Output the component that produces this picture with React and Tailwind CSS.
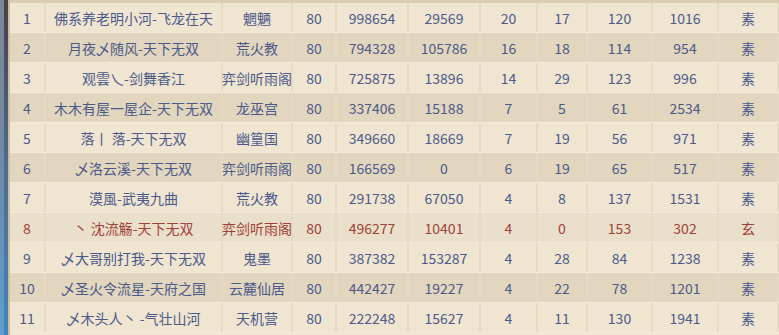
const rows = [
  ['1', '佛系养老明小河-飞龙在天', '魍魉', '80', '998654', '29569', '20', '17', '120', '1016', '素'],
  ['2', '月夜乄随风-天下无双', '荒火教', '80', '794328', '105786', '16', '18', '114', '954', '素'],
  ['3', '观雲乀-剑舞香江', '弈剑听雨阁', '80', '725875', '13896', '14', '29', '123', '996', '素'],
  ['4', '木木有屋一屋企-天下无双', '龙巫宫', '80', '337406', '15188', '7', '5', '61', '2534', '素'],
  ['5', '落丨 落-天下无双', '幽篁国', '80', '349660', '18669', '7', '19', '56', '971', '素'],
  ['6', '乄洛云溪-天下无双', '弈剑听雨阁', '80', '166569', '0', '6', '19', '65', '517', '素'],
  ['7', '漠風-武夷九曲', '荒火教', '80', '291738', '67050', '4', '8', '137', '1531', '素'],
  ['8', '丶 沈流觞-天下无双', '弈剑听雨阁', '80', '496277', '10401', '4', '0', '153', '302', '玄'],
  ['9', '乄大哥别打我-天下无双', '鬼墨', '80', '387382', '153287', '4', '28', '84', '1238', '素'],
  ['10', '乄圣火令流星-天府之国', '云麓仙居', '80', '442427', '19227', '4', '22', '78', '1201', '素'],
  ['11', '乄木头人丶 -气壮山河', '天机营', '80', '222248', '15627', '4', '11', '130', '1941', '素'],
];

function Row({ cells, index }) {
  const self = index === 7;
  const bg = self ? 'bg-[#e9dfca]' : index % 2 === 0 ? 'bg-[#efe5d1]' : 'bg-[#e2d6be]';
  const color = self ? 'text-[#a23f3a]' : 'text-[#4c5a8b]';
  return (
    <div
      className={`grid h-[30px] grid-cols-[36px_177px_70px_44px_72px_72px_57px_50px_65px_66px_60px] border-b border-[#f3ead8] ${bg} ${color}`}
    >
      {cells.map((c, i) => (
        <div
          key={i}
          className="flex items-center justify-center whitespace-nowrap border-r-2 border-[#e6dac3] text-[14px] leading-none"
        >
          {c}
        </div>
      ))}
    </div>
  );
}

export default function App() {
  return (
    <div className="flex h-[335px] w-[779px] overflow-hidden bg-[#efe5d1] font-['Noto_Sans_CJK_SC',sans-serif]">
      <div className="flex w-[10px] shrink-0">
        <div className="w-[4px] bg-gradient-to-b from-[#7d8796] via-[#6f8aa6] to-[#5f9ccd]" />
        <div className="w-[4px] bg-gradient-to-b from-[#4a3f48] via-[#4b6d90] to-[#3f86c0]" />
        <div className="w-[2px] bg-[#c9bda5]" />
      </div>
      <div className="flex-1">
        <div className="h-[3px] bg-[#dccdb1]" />
        {rows.map((r, i) => (
          <Row key={i} cells={r} index={i} />
        ))}
      </div>
    </div>
  );
}
